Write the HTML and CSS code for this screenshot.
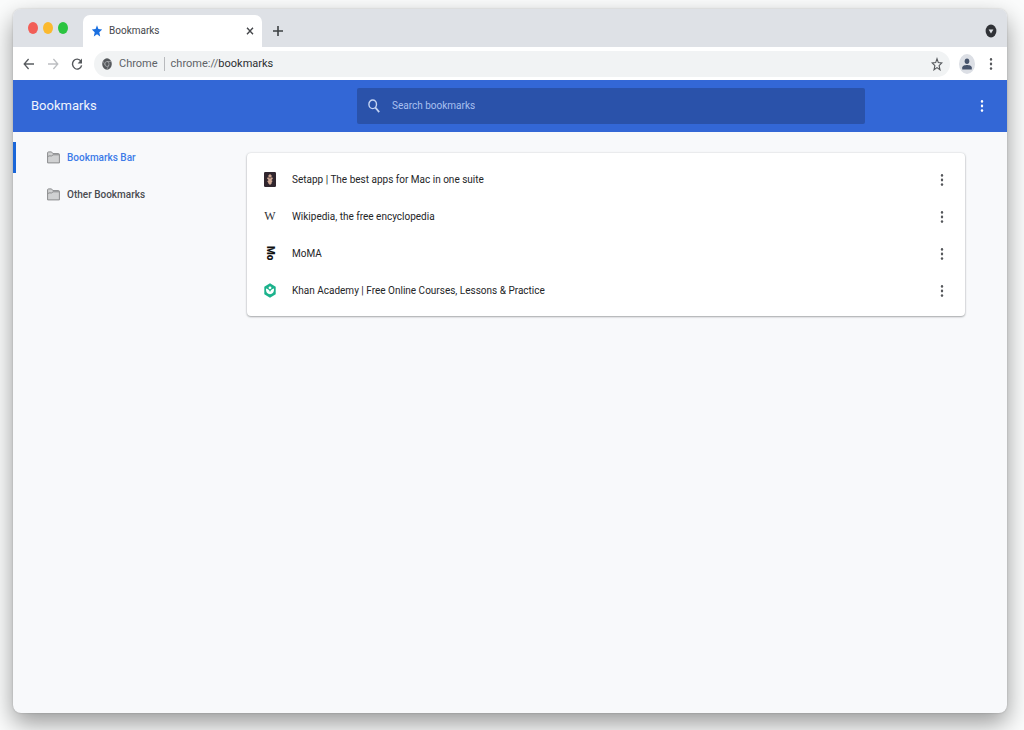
FILE: index.html
```html
<!DOCTYPE html>
<html lang="en">
<head>
<meta charset="utf-8">
<title>Bookmarks</title>
<link rel="stylesheet" href="styles.css">
</head>
<body>
<svg class="defs" aria-hidden="true">
  <symbol id="dots" viewBox="0 0 4 14"><ellipse cx="2" cy="2.4" rx="1.2" ry="1.4"/><ellipse cx="2" cy="7" rx="1.2" ry="1.4"/><ellipse cx="2" cy="11.6" rx="1.2" ry="1.4"/></symbol>
  <symbol id="folder" viewBox="0 0 13 13"><path d="M.6 11.9V1.8q0-.9.9-.9h3l1.4 1.7h5.6q.9 0 .9.9v8.4z" fill="#d0d1d2" stroke="#8b8c8e"/><path d="M.6 6.2l1-1.3h3.2L6 3.8h6.4" fill="none" stroke="#8b8c8e"/></symbol>
</svg>
<div class="window">
  <div class="tabstrip">
    <div class="lights"><span class="light red"></span><span class="light yellow"></span><span class="light green"></span></div>
    <div class="tab">
      <svg class="tab-star" viewBox="0 0 12 12"><path d="M6 .2l1.4 3.9 3.8.3-2.9 2.8.9 4.3L6 9.2l-3.2 2.3.9-4.3L.8 4.4l3.8-.3z" fill="#1a6fe0"/></svg>
      <span class="tab-title">Bookmarks</span>
      <button class="icon-btn" aria-label="Close tab"><svg class="close" viewBox="0 0 8 8"><path d="M1 .8l6 6.4M7 .8L1 7.2" stroke="#45474b" stroke-width="1.4"/></svg></button>
    </div>
    <button class="icon-btn new-tab" aria-label="New tab"><svg class="plus" viewBox="0 0 10 12"><path d="M5 1v10M0 6h10" stroke="#3c4043" stroke-width="1.6"/></svg></button>
    <button class="icon-btn search-tabs" aria-label="Search tabs"><svg class="tabs-icon" viewBox="0 0 12 14"><ellipse cx="6" cy="7" rx="5.4" ry="6.5" fill="#303237"/><path d="M3.6 5.5h4.8L6 9.4z" fill="#dee1e6"/></svg></button>
  </div>
  <div class="toolbar">
    <button class="icon-btn" aria-label="Back"><svg class="nav-icon" viewBox="0 0 12 12"><path d="M11 6H1.4M5.6 1L1.2 6l4.4 5" fill="none" stroke="#5a5d61" stroke-width="1.3"/></svg></button>
    <button class="icon-btn" aria-label="Forward"><svg class="nav-icon" viewBox="0 0 12 12"><path d="M1 6h9.6M6.4 1l4.4 5-4.4 5" fill="none" stroke="#bdbfc2" stroke-width="1.3"/></svg></button>
    <button class="icon-btn" aria-label="Reload"><svg class="nav-icon" viewBox="0 0 12 12"><path d="M9.9 3.2A4.6 5 0 1 0 10.6 7.3" fill="none" stroke="#55585c" stroke-width="1.4"/><path d="M11 .4v5H6.6z" fill="#55585c"/></svg></button>
    <div class="omnibox">
      <svg class="chrome-icon" viewBox="0 0 10 12"><ellipse cx="5" cy="6" rx="4.8" ry="5.7" fill="#55585c"/><ellipse cx="5" cy="6" rx="2.1" ry="2.5" fill="#55585c" stroke="#b5b7ba" stroke-width=".7"/><path d="M5 3.5h4.3M3.2 7.2L1 3.2M6.8 7.2L4.8 11.6" stroke="#b5b7ba" stroke-width=".6"/></svg>
      <span class="site">Chrome</span><span class="divider"></span>
      <span class="url">chrome://<span class="host">bookmarks</span></span>
      <button class="icon-btn star-btn" aria-label="Bookmark this page"><svg class="star-icon" viewBox="0 0 12 14"><path d="M6 1.7l1.3 3.9 3.5.3-2.7 2.8.9 4.1-3-2.2-3 2.2.9-4.1-2.7-2.8 3.5-.3z" fill="none" stroke="#55585c" stroke-width="1.1"/></svg></button>
    </div>
    <button class="icon-btn avatar" aria-label="Profile"><svg class="person" viewBox="0 0 10 12"><ellipse cx="5" cy="3.2" rx="2.3" ry="2.7" fill="#46536b"/><path d="M.2 11.5V9.6C.2 7.8 3 7 5 7s4.8.8 4.8 2.6v1.9z" fill="#46536b"/></svg></button>
    <button class="icon-btn menu" aria-label="Browser menu"><svg class="dots"><use href="#dots"/></svg></button>
  </div>
  <header class="header">
    <h1 class="title">Bookmarks</h1>
    <label class="search">
      <svg class="search-icon" viewBox="0 0 12 14"><ellipse cx="4.7" cy="5.3" rx="3.8" ry="4.3" fill="none" stroke="#c4d3f2" stroke-width="1.4"/><path d="M7.2 8.4l4 4.7" stroke="#c4d3f2" stroke-width="1.7"/></svg>
      <input class="search-input" type="search" placeholder="Search bookmarks" aria-label="Search bookmarks">
    </label>
    <button class="icon-btn header-menu" aria-label="Organize"><svg class="dots"><use href="#dots"/></svg></button>
  </header>
  <div class="content">
    <nav class="sidebar">
      <a class="folder active" href="#"><svg class="folder-icon"><use href="#folder"/></svg>Bookmarks Bar</a>
      <a class="folder" href="#"><svg class="folder-icon"><use href="#folder"/></svg>Other Bookmarks</a>
    </nav>
    <main class="main">
      <ul class="card">
        <li class="row">
          <svg class="favicon" viewBox="0 0 12 15"><rect width="12" height="15" rx="1.2" fill="#30262e"/><path d="M6 2l2 2-2 2-2-2zM6 9l2 2-2 2-2-2zM4 4.9l4.6 4.2-1.2 1.6L3 6.500zM8 4.900l.9 1.800-4.600 4-1.100-1.400z" fill="#cfa793"/></svg>
          <a class="link" href="#">Setapp | The best apps for Mac in one suite</a><button class="icon-btn" aria-label="More actions for Setapp"><svg class="dots"><use href="#dots"/></svg></button>
        </li>
        <li class="row">
          <span class="favicon wiki">W</span>
          <a class="link" href="#">Wikipedia, the free encyclopedia</a><button class="icon-btn" aria-label="More actions for Wikipedia"><svg class="dots"><use href="#dots"/></svg></button>
        </li>
        <li class="row">
          <span class="favicon moma">Mo</span>
          <a class="link" href="#">MoMA</a><button class="icon-btn" aria-label="More actions for MoMA"><svg class="dots"><use href="#dots"/></svg></button>
        </li>
        <li class="row">
          <svg class="favicon" viewBox="0 0 12 15"><path d="M6 .3l5.700 3.500v7.400L6 14.700.3 11.200V3.800z" fill="#1bb28c"/><circle cx="6" cy="4.800" r="1.400" fill="#fff"/><path d="M2 5.500c2.200.5 3.500 1.700 4 3.500.5-1.800 1.800-3 4-3.500.2 3.600-1.500 5.700-4 5.700S1.800 9.100 2 5.500z" fill="#fff"/></svg>
          <a class="link" href="#">Khan Academy | Free Online Courses, Lessons &amp; Practice</a><button class="icon-btn" aria-label="More actions for Khan Academy"><svg class="dots"><use href="#dots"/></svg></button>
        </li>
      </ul>
    </main>
  </div>
</div>
</body>
</html>
```
FILE: styles.css
```css
* { box-sizing: border-box; }
body {
  margin: 0;
  min-height: 100vh;
  padding: 9px 17px 17px 13px;
  display: flex;
  overflow: hidden;
  background: #fbfcfc;
  font: 10px/16px Roboto, sans-serif;
  color: #303134;
}
.defs { display: none; }
.window {
  flex: 1;
  min-width: 0;
  display: flex;
  flex-direction: column;
  border-radius: 8px;
  overflow: hidden;
  background: #f8f9fb;
  box-shadow: 0 0 2px rgba(0, 0, 0, .2), 0 10px 24px rgba(0, 0, 0, .4);
}
.icon-btn {
  display: flex;
  align-items: center;
  justify-content: center;
  flex: none;
  padding: 0;
  border: 0;
  background: none;
  color: #55575b;
}
.dots { width: 4px; height: 14px; fill: currentColor; }
.tabstrip { display: flex; height: 38px; background: #dee1e6; }
.lights { display: flex; gap: 5px; width: 70px; padding: 13px 0 0 15px; }
.light { width: 10px; height: 12px; border-radius: 50%; }
.red { background: #f25e57; }
.yellow { background: #fbb92e; }
.green { background: #2bc440; }
.tab {
  display: flex;
  align-items: center;
  width: 179px;
  margin-top: 6px;
  padding: 0 8px;
  border-radius: 7px 7px 0 0;
  background: #fff;
}
.tab-star { width: 12px; height: 12px; }
.tab-title { flex: 1; padding-left: 6px; color: #45474b; }
.close { width: 8px; height: 8px; }
.new-tab { width: 32px; padding-top: 6px; }
.plus { width: 10px; height: 12px; }
.search-tabs { margin-left: auto; padding: 6px 10px 0 0; }
.tabs-icon { width: 12px; height: 14px; }
.toolbar { display: flex; align-items: center; gap: 12px; height: 33px; padding: 0 14px 0 10px; background: #fff; }
.nav-icon { width: 12px; height: 12px; }
.omnibox {
  flex: 1;
  display: flex;
  align-items: center;
  height: 26px;
  margin-left: -1px;
  padding: 0 7px 0 8px;
  border-radius: 13px;
  background: #f1f3f4;
  color: #606368;
  font-size: 11px;
}
.chrome-icon { width: 10px; height: 12px; margin-right: 7px; }
.divider { width: 1px; height: 14px; margin: 0 6px; background: #b8babd; }
.host { color: #2b2d30; }
.star-btn { margin-left: auto; }
.star-icon { width: 12px; height: 14px; }
.avatar { width: 16px; height: 20px; margin: 0 2px 0 -3px; border-radius: 50%; background: #dcdfe5; }
.person { width: 10px; height: 12px; }
.header {
  display: flex;
  align-items: center;
  height: 52px;
  padding-right: 23px;
  background: #3367d6;
  color: #fff;
}
.title { flex: 0 0 344px; margin: 0; padding-left: 18px; font-size: 13px; font-weight: 400; color: #f0f4fd; }
.search { flex: 1; display: flex; align-items: center; gap: 12px; height: 36px; padding: 0 11px; border-radius: 2px; background: #2a52aa; }
.search-icon { width: 12px; height: 14px; }
.search-input { flex: 1; min-width: 0; border: 0; padding: 0; outline: 0; background: none; color: #fff; font: 10px/16px Roboto, sans-serif; }
.search-input::placeholder { color: #a9c0f0; opacity: 1; }
.header-menu { width: 4px; margin-left: 115px; color: #fff; }
.content { flex: 1; display: flex; }
.sidebar { flex: 0 0 234px; padding-top: 10px; }
.folder {
  display: flex;
  align-items: center;
  gap: 7px;
  height: 31px;
  margin-bottom: 6px;
  padding-left: 31px;
  border-left: 3px solid transparent;
  color: #4a4c50;
  font-weight: 500;
  text-decoration: none;
}
.folder.active { border-color: #1a66d8; color: #3d7be8; border-radius: 0 2px 2px 0; }
.folder-icon { width: 13px; height: 13px; }
.main { flex: 1; padding: 21px 42px 0 0; }
.card {
  margin: 0;
  padding: 8px 21px 7px 17px;
  list-style: none;
  border-radius: 4px;
  background: #fff;
  box-shadow: 0 1px 2px rgba(60, 64, 67, .4), 0 0 2px rgba(60, 64, 67, .2);
}
.row { display: flex; align-items: center; height: 37px; }
.favicon { flex: none; width: 12px; height: 15px; }
.wiki { display: flex; align-items: center; justify-content: center; font: 12px/15px "Liberation Serif", serif; }
.moma { display: flex; align-items: center; justify-content: center; writing-mode: vertical-rl; font: 900 10px/12px Roboto, sans-serif; color: #111; }
.link { flex: 1; padding-left: 16px; color: #242527; text-decoration: none; }
```
